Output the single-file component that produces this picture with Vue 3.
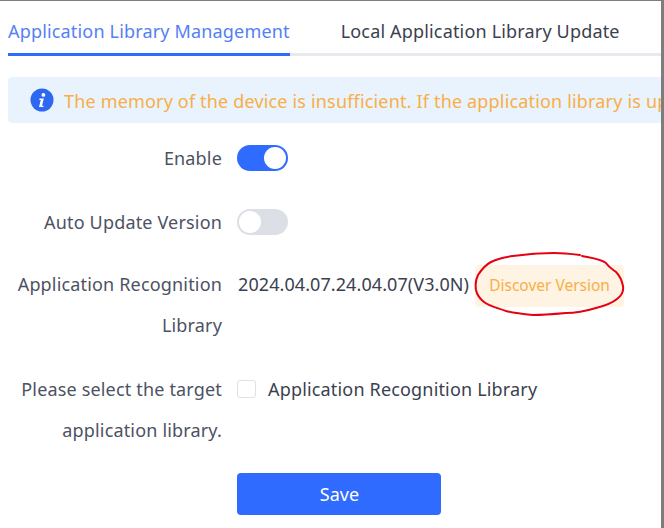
<script setup>
import { ref } from 'vue'

const tabs = ['Application Library Management', 'Local Application Library Update']
const enabled = ref(true)
const autoUpdate = ref(false)
const target = ref(false)
</script>

<template>
  <div class="page">
    <div class="tabs">
      <div
        v-for="(tab, index) in tabs"
        :key="tab"
        class="tabs__item"
        :class="{ 'tabs__item--active': index === 0 }"
      >
        {{ tab }}
      </div>
    </div>

    <div class="notice">
      <svg class="notice__icon" width="24" height="24" viewBox="0 0 24 24">
        <circle cx="12" cy="12" r="11.5" fill="#2f68f0" />
        <circle cx="13.4" cy="6.9" r="1.9" fill="#fff" />
        <path d="M9.6 10.6h4.2l-1.8 7.2h1.7l-.4 1.3H9l1.8-7.2H9.3z" fill="#fff" />
      </svg>
      <span class="notice__text">The memory of the device is insufficient. If the application library is updated, the device may restart.</span>
    </div>

    <div class="form">
      <div class="form__row form__row--enable">
        <label class="form__label">Enable</label>
        <div class="form__control">
          <span class="switch" :class="{ 'switch--on': enabled }"><i></i></span>
        </div>
      </div>
      <div class="form__row form__row--auto">
        <label class="form__label">Auto Update Version</label>
        <div class="form__control">
          <span class="switch" :class="{ 'switch--on': autoUpdate }"><i></i></span>
        </div>
      </div>
      <div class="form__row form__row--library">
        <label class="form__label">Application Recognition Library</label>
        <div class="form__control">
          <span class="form__value">2024.04.07.24.04.07(V3.0N)</span>
          <button class="discover">Discover Version</button>
        </div>
      </div>
      <div class="form__row form__row--target">
        <label class="form__label">Please select the target application library.</label>
        <div class="form__control">
          <span class="checkbox" :class="{ 'checkbox--on': target }"></span>
          <span>Application Recognition Library</span>
        </div>
      </div>
      <div class="form__row">
        <div class="form__label"></div>
        <button class="save">Save</button>
      </div>
    </div>

    <svg class="scribble" width="664" height="528" viewBox="0 0 664 528">
      <path
        d="M582 256C592 258 601 259 606 263C609 267 612 269 616 272C620 276 622 281 623 286C624 292 621 296 617 299C611 304 604 306 596 308C586 311 577 313 566 313C555 314 544 315 533 315C523 314 514 313 506 311C498 308 489 306 484 302C479 298 477 295 476 290C475 284 476 279 478 275C482 269 485 265 491 262C497 259 505 257 513 256C527 254 541 253 554 253C563 253 572 254 580 255"
        fill="none"
        stroke="#e60012"
        stroke-width="2"
        stroke-linecap="round"
      />
    </svg>
  </div>
</template>

<style scoped>
.page {
  position: relative;
  box-sizing: border-box;
  width: 664px;
  height: 528px;
  padding: 17px 0 0 8px;
  overflow: hidden;
  background: #fff;
  border-top: 1px solid #7d7d7d;
  font-family: "Noto Sans", "Open Sans", sans-serif;
  font-size: 18px;
  letter-spacing: 0.17px;
  color: #4d5263;
}
.page::after {
  content: "";
  position: absolute;
  top: 0;
  right: 0;
  bottom: 0;
  width: 3px;
  background: #7d7d7d;
}
.tabs {
  display: flex;
  gap: 51px;
  box-sizing: border-box;
  height: 38px;
  border-bottom: 3px solid #e7e9ef;
}
.tabs__item {
  height: 38px;
  line-height: 27px;
  box-sizing: border-box;
  white-space: nowrap;
  color: #3b3f4f;
}
.tabs__item--active {
  color: #5480f6;
  border-bottom: 3px solid #2f6bff;
}
.notice {
  display: flex;
  align-items: center;
  gap: 10px;
  height: 46px;
  margin-top: 21px;
  padding-left: 22px;
  background: #e8f3fd;
  border-radius: 4px 0 0 4px;
  white-space: nowrap;
}
.notice__icon {
  flex: none;
}
.notice__text {
  padding-top: 2px;
  color: #f9ae47;
}
.form {
  display: flex;
  flex-direction: column;
  margin-top: 15px;
}
.form__row {
  display: flex;
  align-items: flex-start;
  gap: 15px;
}
.form__row--enable {
  margin-bottom: 23px;
}
.form__row--auto {
  margin-bottom: 21px;
}
.form__row--library {
  margin-bottom: 23px;
}
.form__row--target {
  margin-bottom: 22px;
}
.form__label {
  flex: none;
  width: 214px;
  text-align: right;
  line-height: 41px;
}
.form__control {
  display: flex;
  align-items: center;
  height: 40px;
  white-space: nowrap;
  color: #3b3f4f;
}
.form__value {
  margin-left: 1px;
  letter-spacing: 0.08px;
}
.switch {
  position: relative;
  display: block;
  width: 51px;
  height: 26px;
  border-radius: 13px;
  background: #dcdfe6;
}
.switch i {
  position: absolute;
  top: 2px;
  left: 2px;
  width: 22px;
  height: 22px;
  border-radius: 50%;
  background: #fff;
}
.switch--on {
  background: #2f6bff;
}
.switch--on i {
  left: 27px;
}
.discover {
  align-self: flex-start;
  flex: none;
  width: 149px;
  height: 42px;
  margin: 1px 0 0 6px;
  padding: 0 0 2px;
  border: none;
  border-radius: 4px;
  background: #fff3e3;
  color: #f9ae47;
  font: inherit;
  font-size: 15.5px;
  letter-spacing: 0;
}
.checkbox {
  display: block;
  box-sizing: border-box;
  width: 19px;
  height: 18px;
  margin-right: 12px;
  border: 1px solid #dfe1e8;
  border-radius: 3px;
  background: #fff;
}
.save {
  width: 204px;
  height: 42px;
  padding: 0 0 0 1px;
  border: none;
  border-radius: 4px;
  background: #2f6bff;
  color: #fff;
  font: inherit;
  font-size: 18px;
}
.scribble {
  position: absolute;
  top: -1px;
  left: 0;
  pointer-events: none;
}
</style>
